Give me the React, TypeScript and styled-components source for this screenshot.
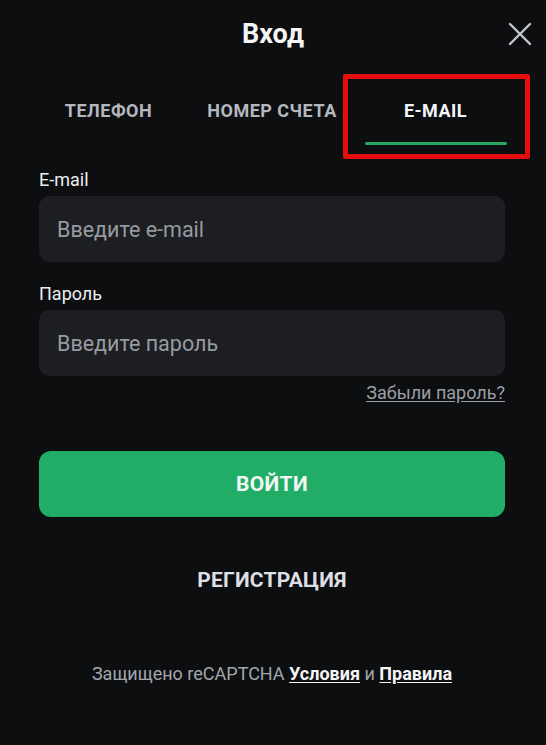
import React from "react";
import styled, { createGlobalStyle } from "styled-components";

const Global = createGlobalStyle`
  html, body {
    margin: 0;
    padding: 0;
    background: #0d0e10;
    font-family: Roboto, "Noto Sans", "Liberation Sans", sans-serif;
  }
  * { box-sizing: border-box; }
`;

const Page = styled.div`
  width: 546px;
  min-height: 745px;
  background: #0d0e10;
  display: flex;
  flex-direction: column;
  padding: 0 41px 0 39px;
`;

const Header = styled.div`
  height: 68px;
  display: grid;
  grid-template-columns: 1fr auto 1fr;
  align-items: center;
  margin: 0 -41px 0 -39px;
  padding: 0 14px;
`;

const Title = styled.h1`
  grid-column: 2;
  margin: 0;
  font-size: 27px;
  font-weight: 700;
  color: #f4f5f6;
  line-height: 30px;
`;

const Close = styled.button`
  justify-self: end;
  width: 24px;
  height: 24px;
  padding: 0;
  border: none;
  background: transparent;
  display: flex;
  align-items: center;
  justify-content: center;
  cursor: pointer;
`;

const Tabs = styled.div`
  display: grid;
  grid-template-columns: 139px 188px 139px;
`;

const Tab = styled.div<{ $active?: boolean }>`
  position: relative;
  height: 77px;
  padding-top: 33px;
  text-align: center;
  font-size: 18px;
  line-height: 20px;
  font-weight: 700;
  letter-spacing: 0.5px;
  color: ${(p) => (p.$active ? "#f4f5f6" : "#b4b8be")};
  &::after {
    content: "";
    display: ${(p) => (p.$active ? "block" : "none")};
    position: absolute;
    left: -1px;
    right: -2px;
    bottom: 0;
    height: 3px;
    border-radius: 2px;
    background: #2aa862;
  }
`;

const Highlight = styled.div`
  position: absolute;
  left: -23px;
  right: -25px;
  top: 6px;
  bottom: -14px;
  border: 5px solid #e60d0d;
  border-radius: 2px;
  pointer-events: none;
`;

const Form = styled.form`
  display: flex;
  flex-direction: column;
  margin-top: 25px;
`;

const Label = styled.label<{ $top?: number }>`
  font-size: 18px;
  line-height: 20px;
  color: #eceef0;
  margin-top: ${(p) => p.$top ?? 0}px;
  margin-bottom: 6px;
`;

const Input = styled.input`
  height: 66px;
  border: none;
  outline: none;
  border-radius: 11px;
  background: #1c1e21;
  padding: 0 18px;
  font-family: inherit;
  font-size: 21.5px;
  color: #e0e2e5;
  &::placeholder {
    color: #979ba1;
  }
`;

const Forgot = styled.a`
  align-self: flex-end;
  margin-top: 7px;
  font-size: 18px;
  line-height: 20px;
  color: #9a9ea4;
  text-decoration: underline;
  text-underline-offset: 2px;
`;

const Submit = styled.button`
  margin-top: 48px;
  height: 66px;
  border: none;
  border-radius: 12px;
  background: #22ad67;
  color: #f2f7f4;
  font-family: inherit;
  font-size: 21px;
  font-weight: 700;
  letter-spacing: 0.3px;
`;

const Register = styled.div`
  margin-top: 51px;
  text-align: center;
  font-size: 21px;
  line-height: 24px;
  font-weight: 700;
  letter-spacing: 0.2px;
  color: #dcdfe3;
`;

const Footer = styled.div`
  margin-top: 72px;
  text-align: center;
  font-size: 18px;
  line-height: 20px;
  color: #a2a6ac;
`;

const FooterLink = styled.a`
  color: #f4f5f6;
  font-weight: 700;
  text-decoration: underline;
  text-underline-offset: 2px;
`;

export default function App() {
  return (
    <>
      <Global />
      <Page>
        <Header>
          <Title>Вход</Title>
          <Close aria-label="Закрыть">
            <svg width="24" height="24" viewBox="0 0 24 24">
              <path d="M2 2 L22 22 M22 2 L2 22" stroke="#c4c7cc" strokeWidth="2.4" strokeLinecap="round" />
            </svg>
          </Close>
        </Header>
        <Tabs>
          <Tab>ТЕЛЕФОН</Tab>
          <Tab>НОМЕР СЧЕТА</Tab>
          <Tab $active>
            E-MAIL
            <Highlight />
          </Tab>
        </Tabs>
        <Form onSubmit={(e) => e.preventDefault()}>
          <Label>E-mail</Label>
          <Input placeholder="Введите e-mail" />
          <Label $top={22}>Пароль</Label>
          <Input type="password" placeholder="Введите пароль" />
          <Forgot href="#">Забыли пароль?</Forgot>
          <Submit type="submit">ВОЙТИ</Submit>
        </Form>
        <Register>РЕГИСТРАЦИЯ</Register>
        <Footer>
          Защищено reCAPTCHA <FooterLink href="#">Условия</FooterLink> и{" "}
          <FooterLink href="#">Правила</FooterLink>
        </Footer>
      </Page>
    </>
  );
}
